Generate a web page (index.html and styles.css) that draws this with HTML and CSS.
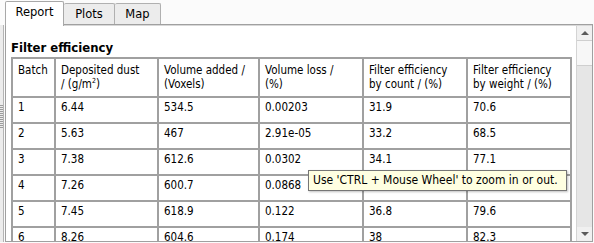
FILE: index.html
```html
<!DOCTYPE html>
<html>
<head>
<meta charset="utf-8">
<link rel="stylesheet" href="styles.css">
</head>
<body>
<div class="window">
  <div class="grip">
    <div class="grip-dashes"><i></i><i></i><i></i><i></i><i></i><i></i><i></i><i></i><i></i><i></i><i></i><i></i></div>
  </div>
  <div class="tabs">
    <div class="tabbar">
      <div class="tab active">Report</div>
      <div class="tab plots">Plots</div>
      <div class="tab map">Map</div>
    </div>
    <div class="panel">
      <div class="view">
        <h1 class="title">Filter efficiency</h1>
        <table class="data">
          <colgroup>
            <col class="c1"><col class="c2"><col class="c3"><col class="c4"><col class="c5"><col class="c6">
          </colgroup>
          <thead>
            <tr>
              <th>Batch</th>
              <th>Deposited dust<br>/ (g/m<sup>2</sup>)</th>
              <th>Volume added /<br>(Voxels)</th>
              <th>Volume loss /<br>(%)</th>
              <th>Filter efficiency<br>by count / (%)</th>
              <th>Filter efficiency<br>by weight / (%)</th>
            </tr>
          </thead>
          <tbody>
            <tr><td>1</td><td>6.44</td><td>534.5</td><td>0.00203</td><td>31.9</td><td>70.6</td></tr>
            <tr><td>2</td><td>5.63</td><td>467</td><td>2.91e-05</td><td>33.2</td><td>68.5</td></tr>
            <tr><td>3</td><td>7.38</td><td>612.6</td><td>0.0302</td><td>34.1</td><td>77.1</td></tr>
            <tr><td>4</td><td>7.26</td><td>600.7</td><td>0.0868</td><td>35.6</td><td>77.7</td></tr>
            <tr><td>5</td><td>7.45</td><td>618.9</td><td>0.122</td><td>36.8</td><td>79.6</td></tr>
            <tr><td>6</td><td>8.26</td><td>604.6</td><td>0.174</td><td>38</td><td>82.3</td></tr>
          </tbody>
        </table>
      </div>
      <div class="scrollbar">
        <div class="sb-btn"><span class="arrow-up"></span></div>
        <div class="sb-thumb"></div>
        <div class="sb-track"></div>
        <div class="sb-btn"><span class="arrow-down"></span></div>
      </div>
    </div>
  </div>
  <div class="tooltip">Use 'CTRL + Mouse Wheel' to zoom in or out.</div>
</div>
</body>
</html>
```
FILE: styles.css
```css
html, body {
  margin: 0;
  padding: 0;
  height: 243px;
  overflow: hidden;
}
body {
  background: #fbfbfb;
  font-family: "DejaVu Sans Condensed", "DejaVu Sans", sans-serif;
  color: #000;
}
.window {
  display: flex;
  height: 243px;
  position: relative;
}
.grip {
  width: 3px;
  margin-top: 25px;
  height: 217px;
  background: #ececec;
  border-right: 1px solid #b4b4b4;
}
.grip-dashes {
  margin-top: 80px;
  display: flex;
  flex-direction: column;
  gap: 1px;
}
.grip-dashes i {
  display: block;
  height: 1px;
  background: #9c9c9c;
}
.tabs {
  flex: 1;
  display: flex;
  flex-direction: column;
  margin-left: 1px;
  margin-right: 1px;
}
.tabbar {
  height: 24px;
  display: flex;
  align-items: flex-end;
  position: relative;
  z-index: 2;
  font-family: "DejaVu Sans", sans-serif;
  font-size: 11.5px;
}
.tab {
  box-sizing: border-box;
  text-align: center;
  border: 1px solid #b0b0b0;
  border-bottom: none;
  border-radius: 2px 2px 0 0;
  background: #ececec;
  height: 21px;
  line-height: 19px;
  padding-top: 1px;
}
.tab.active {
  width: 59px;
  height: 25px;
  margin-bottom: -2px;
  background: #fff;
  border-color: #a8a8a8;
  line-height: 21px;
  padding-top: 0;
}
.tab.plots {
  width: 51px;
  border-left: none;
}
.tab.map {
  width: 46px;
  border-left: none;
}
.panel {
  box-sizing: border-box;
  height: 218px;
  border: 1px solid #a0a0a0;
  background: #fff;
  box-shadow: inset 0 1px 0 #d8d8d8;
  display: flex;
  position: relative;
  z-index: 1;
}
.view {
  flex: 1;
  overflow: hidden;
  padding-left: 5px;
}
.title {
  margin: 15px 0 1px 0;
  font-size: 13px;
  line-height: 16px;
  font-weight: bold;
}
.data {
  border-collapse: separate;
  border-spacing: 0;
  table-layout: fixed;
  width: 561px;
  border-left: 2px solid #a0a0a0;
  border-top: 2px solid #a0a0a0;
  font-size: 11.5px;
  line-height: 14px;
}
.data col.c1 { width: 43px; }
.data col.c2 { width: 103px; }
.data col.c3 { width: 101px; }
.data col.c4 { width: 104px; }
.data col.c5 { width: 104px; }
.data col.c6 { width: 104px; }
.data th, .data td {
  box-sizing: border-box;
  border-right: 2px solid #a0a0a0;
  border-bottom: 2px solid #a0a0a0;
  text-align: left;
  vertical-align: top;
  font-weight: normal;
  white-space: nowrap;
}
.data th {
  height: 39px;
  padding: 4px 5px 5px 5px;
}
.data td {
  height: 26px;
  padding: 2px 5px 8px 5px;
}
.data sup {
  font-size: 7px;
  line-height: 0;
  vertical-align: 5px;
}
.scrollbar {
  width: 15px;
  margin-top: 1px;
  border-left: 1px solid #d4d4d4;
  background: #e6e6e6;
  display: flex;
  flex-direction: column;
}
.sb-btn {
  height: 14px;
  background: #f0f0f0;
  display: flex;
  align-items: center;
  justify-content: center;
}
.arrow-up {
  width: 0;
  height: 0;
  border-left: 4px solid transparent;
  border-right: 4px solid transparent;
  border-bottom: 4px solid #5a5a5a;
}
.arrow-down {
  width: 0;
  height: 0;
  border-left: 4px solid transparent;
  border-right: 4px solid transparent;
  border-top: 4px solid #5a5a5a;
}
.sb-thumb {
  height: 26px;
  box-sizing: border-box;
  background: #f7f7f7;
  border-top: 1px solid #cfcfcf;
  border-bottom: 1px solid #cfcfcf;
}
.sb-track {
  flex: 1;
}
.tooltip {
  position: absolute;
  left: 308px;
  top: 170px;
  width: 259px;
  height: 21px;
  box-sizing: border-box;
  border: 1px solid #767676;
  background: #ffffe1;
  box-shadow: 1px 1px 2px rgba(0, 0, 0, 0.25);
  font-size: 12px;
  line-height: 19px;
  padding-left: 4px;
  white-space: nowrap;
  overflow: hidden;
  z-index: 5;
}
```
